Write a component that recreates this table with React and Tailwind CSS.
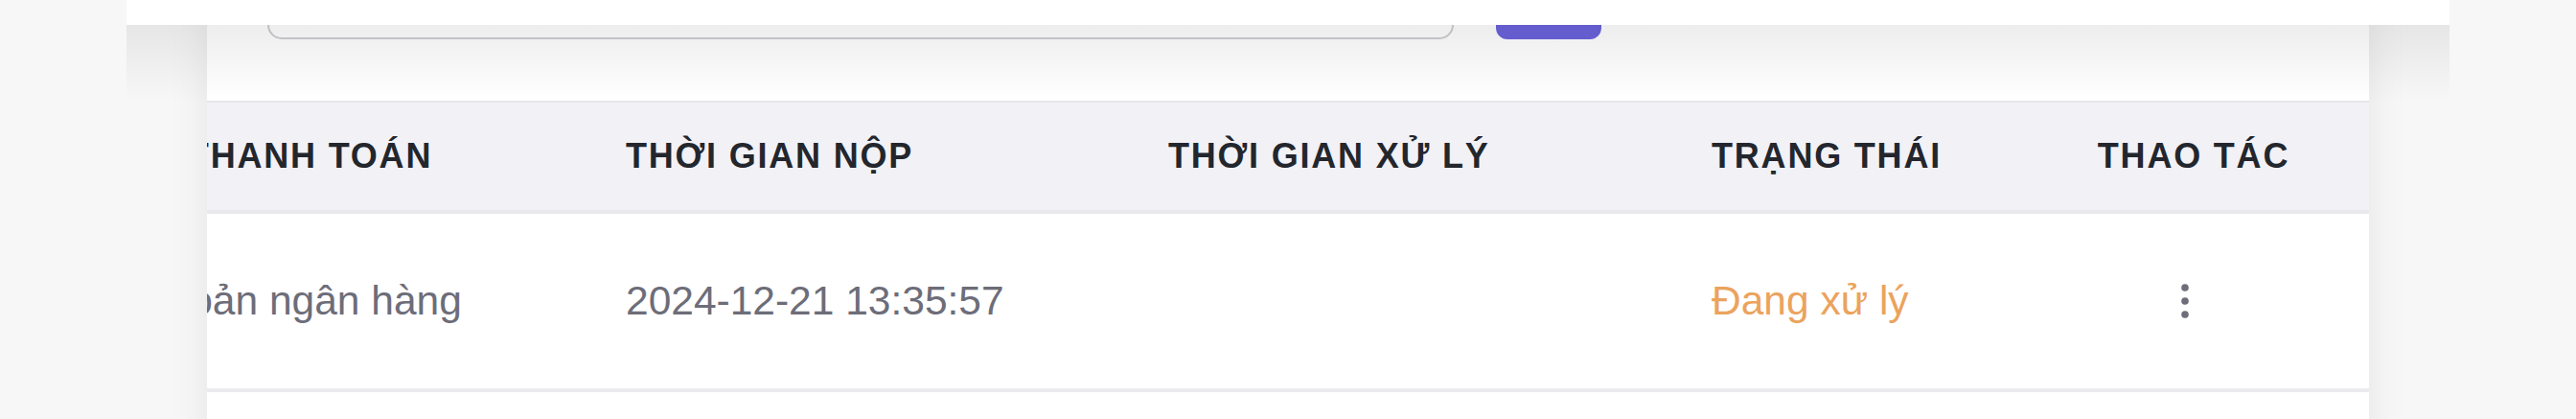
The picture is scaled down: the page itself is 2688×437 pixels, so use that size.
import { useLayoutEffect, useRef } from 'react';

const rows = [
  { method: 'Chuyển khoản ngân hàng', submitted: '2024-12-21 13:35:57', processed: '', status: 'Đang xử lý' },
  { method: 'Chuyển khoản ngân hàng', submitted: '2024-12-20 09:12:04', processed: '2024-12-20 10:02:41', status: 'Hoàn thành' },
];

const KebabIcon = () => (
  <svg width="8" height="36" viewBox="0 0 8 36" fill="#6e6e7a">
    <circle cx="4" cy="4" r="3.8" />
    <circle cx="4" cy="18" r="3.8" />
    <circle cx="4" cy="32" r="3.8" />
  </svg>
);

const App = () => {
  const scrollRef = useRef(null);

  // bảng đang được cuộn ngang sang phải
  useLayoutEffect(() => {
    if (scrollRef.current) scrollRef.current.scrollLeft = 269;
  }, []);

  return (
    <div className="relative min-h-screen bg-[#f7f7f8] font-['Liberation_Sans',Arial,sans-serif]">
      {/* thanh dính phía trên */}
      <div className="absolute top-0 left-[132px] right-[132px] h-[26px] bg-white z-20" />
      <div className="absolute top-[26px] left-[132px] right-[132px] h-[80px] bg-linear-to-b from-black/[0.07] to-transparent z-20 pointer-events-none" />

      <div className="px-[216px]">
        <div className="bg-white shadow-[0_0_40px_rgba(0,0,0,0.08)]">
          <div className="flex items-end gap-[44px] pl-[63px] h-[41px]">
            <div className="w-[1238px] h-[41px] rounded-[15px] border-2 border-[#cdcdd2] bg-white" />
            <button className="w-[110px] h-[41px] rounded-[12px] bg-[#6b63dc]" />
          </div>

          <div
            ref={scrollRef}
            className="mt-[64px] overflow-x-auto [scrollbar-width:none]"
          >
            <div className="w-[2525px]">
              <div className="grid grid-cols-[658px_566px_567px_350px_384px] h-[118px] border-t-2 border-b-4 border-t-[#e6e6eb] border-b-[#e8e8ed] bg-[#f1f1f6] text-[36px] font-bold tracking-[0.05em] text-[#23262d] whitespace-nowrap">
                <div className="flex items-center pl-[19px]">HÌNH THỨC THANH TOÁN</div>
                <div className="flex items-center px-[48px]">THỜI GIAN NỘP</div>
                <div className="flex items-center px-[48px]">THỜI GIAN XỬ LÝ</div>
                <div className="flex items-center px-[48px]">TRẠNG THÁI</div>
                <div className="flex items-center justify-center pl-[18px]">THAO TÁC</div>
              </div>

              {rows.map((row, i) => (
                <div
                  key={i}
                  className="grid grid-cols-[658px_566px_567px_350px_384px] h-[186px] border-b-4 border-[#ebebef] text-[42.5px] text-[#6d6d79] whitespace-nowrap"
                >
                  <div className="flex items-center px-[48px]">{row.method}</div>
                  <div className="flex items-center px-[48px]">{row.submitted}</div>
                  <div className="flex items-center px-[48px]">{row.processed}</div>
                  <div className={`flex items-center px-[48px] ${row.status === 'Đang xử lý' ? 'text-[#eba35d]' : 'text-[#3fb27f]'}`}>
                    {row.status}
                  </div>
                  <div className="flex items-center justify-center">
                    <button className="p-2">
                      <KebabIcon />
                    </button>
                  </div>
                </div>
              ))}
            </div>
          </div>
        </div>
      </div>
    </div>
  );
};

export default App;
